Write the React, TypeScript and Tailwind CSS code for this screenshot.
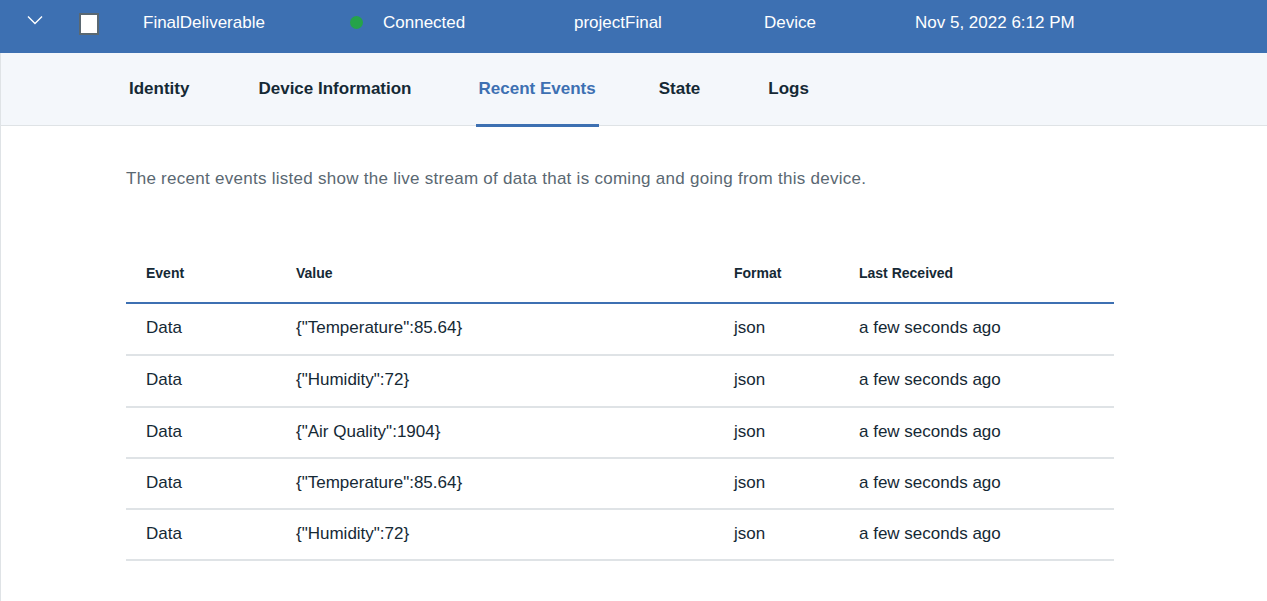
import React from "react";

const rows = [
  { v: '{"Temperature":85.64}', h: "h-[52px]" },
  { v: '{"Humidity":72}', h: "h-[52px]" },
  { v: '{"Air Quality":1904}', h: "h-[51px]" },
  { v: '{"Temperature":85.64}', h: "h-[51px]" },
  { v: '{"Humidity":72}', h: "h-[51px]" },
];

export default function App() {
  return (
    <div
      className="flex min-h-[601px] flex-col bg-white text-[#152935]"
      style={{ fontFamily: '"Liberation Sans", Arial, sans-serif' }}
    >
      {/* Header bar */}
      <div className="flex h-[53px] items-start bg-[#3d70b2] pt-[11px] text-[17px] leading-[24px] text-white">
        <div className="flex w-[79px] pl-[27px] pt-[4px]">
          <svg width="16" height="10" viewBox="0 0 16 10" fill="none">
            <path d="M1 1.5 L8 8.5 L15 1.5" stroke="white" strokeWidth="1.4" />
          </svg>
        </div>
        <div className="mt-[2px] h-[22px] w-[20px] border-2 border-[#5a6872] bg-white" />
        <div className="ml-[44px] w-[207px]">FinalDeliverable</div>
        <div className="flex h-[24px] w-[224px] items-center">
          <span className="-mt-[2px] h-[13px] w-[13px] rounded-full bg-[#25a34a]" />
          <span className="ml-[20px]">Connected</span>
        </div>
        <div className="w-[190px]">projectFinal</div>
        <div className="w-[151px]">Device</div>
        <div>Nov 5, 2022 6:12 PM</div>
      </div>

      <div className="flex-1 border-l border-[#dfe3e6]">
        {/* Tabs */}
        <div className="flex h-[73px] items-stretch border-b border-[#dfe3e6] bg-[#f4f7fb] pl-[125px] text-[17px] font-bold">
          <div className="flex items-center px-[3px]">Identity</div>
          <div className="ml-[63px] flex items-center px-[3px]">Device Information</div>
          <div className="relative ml-[61px] flex items-center px-[3px] text-[#3d70b2]">
            Recent Events
            <span className="absolute -bottom-[2px] left-0 right-0 h-[3px] bg-[#3d70b2]" />
          </div>
          <div className="ml-[57px] flex items-center px-[3px]">State</div>
          <div className="ml-[62px] flex items-center px-[3px]">Logs</div>
        </div>

        {/* Content */}
        <div className="pl-[125px]">
          <p className="mt-[41px] text-[17px] leading-[24px] tracking-[0.27px] text-[#5a6872]">
            The recent events listed show the live stream of data that is coming and going from this device.
          </p>

          <div className="mt-[61px] w-[988px]">
            <div className="flex h-[52px] items-start border-b-2 border-[#3d70b2] pt-[11px] text-[14px] font-bold leading-[20px]">
              <div className="w-[170px] pl-[20px]">Event</div>
              <div className="w-[438px]">Value</div>
              <div className="w-[125px]">Format</div>
              <div>Last Received</div>
            </div>
            {rows.map((r, i) => (
              <div
                key={i}
                className={`flex ${r.h} items-start border-b-2 border-[#dfe3e6] pt-[12px] text-[17px] leading-[24px]`}
              >
                <div className="w-[170px] pl-[20px]">Data</div>
                <div className="w-[438px]">{r.v}</div>
                <div className="w-[125px]">json</div>
                <div>a few seconds ago</div>
              </div>
            ))}
          </div>
        </div>
      </div>
    </div>
  );
}
